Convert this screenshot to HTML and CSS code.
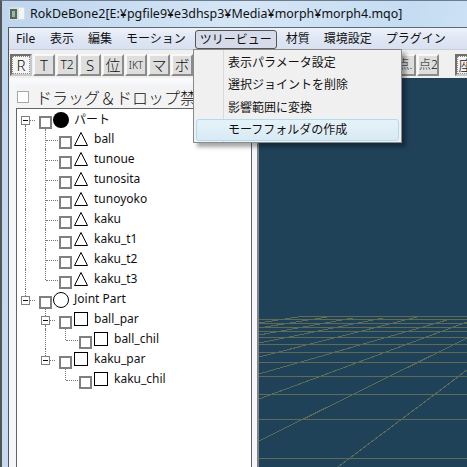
FILE: index.html
```html
<!DOCTYPE html>
<html lang="ja">
<head>
  <meta charset="UTF-8">
  <title>RokDeBone2</title>
  <link rel="stylesheet" href="styles.css">
</head>
<body>
  <div class="window">
    <div class="titlebar">
      <svg class="app-icon" width="16" height="13" viewBox="0 0 16 13">
        <rect x="0" y="0" width="16" height="13" fill="#d8dee2"/>
        <rect x="1" y="2" width="7" height="10" fill="#4f6a5c"/>
        <rect x="3" y="4" width="3" height="6" fill="#9db8a4"/>
        <rect x="10" y="1" width="5" height="11" fill="#f2f5f6"/>
      </svg>
      <span>RokDeBone2[E:¥pgfile9¥e3dhsp3¥Media¥morph¥morph4.mqo]</span>
    </div>

    <div class="client">
      <div class="menubar">
        <span class="menu-item file">File</span>
        <span class="menu-item">表示</span>
        <span class="menu-item">編集</span>
        <span class="menu-item">モーション</span>
        <span class="menu-item open">ツリービュー</span>
        <span class="menu-item">材質</span>
        <span class="menu-item">環境設定</span>
        <span class="menu-item">プラグイン</span>
      </div>

      <div class="popup">
        <div class="popup-item">表示パラメータ設定</div>
        <div class="popup-item">選択ジョイントを削除</div>
        <div class="popup-item">影響範囲に変換</div>
        <div class="popup-item active">モーフフォルダの作成</div>
      </div>

      <div class="toolbar">
        <button class="tool focus">R</button>
        <button class="tool">T</button>
        <button class="tool small">T2</button>
        <button class="tool">S</button>
        <button class="tool">位</button>
        <button class="tool tiny">IKT</button>
        <button class="tool">マ</button>
        <button class="tool">ボ</button>
        <div class="spacer"></div>
        <button class="tool small">点.</button>
        <button class="tool small">点2</button>
        <button class="tool focus last">座</button>
      </div>

      <div class="main">
        <div class="side">
          <label class="drag-check"><span class="checkbox"></span>ドラッグ＆ドロップ禁止</label>
          <div class="tree">
            <div class="row"><i class="cell exp down"></i><b class="box"></b><b class="disc"></b><span class="name">パート</span></div>

            <div class="row"><i class="cell guide"></i><i class="cell tee"></i><b class="box"></b><svg class="tri" width="14" height="14" viewBox="0 0 14 14"><path d="M7 0.5 L13.5 13.5 H0.5 Z" fill="#fff" stroke="#000"/></svg><span class="name">ball</span></div>
            <div class="row"><i class="cell guide"></i><i class="cell tee"></i><b class="box"></b><svg class="tri" width="14" height="14" viewBox="0 0 14 14"><path d="M7 0.5 L13.5 13.5 H0.5 Z" fill="#fff" stroke="#000"/></svg><span class="name">tunoue</span></div>
            <div class="row"><i class="cell guide"></i><i class="cell tee"></i><b class="box"></b><svg class="tri" width="14" height="14" viewBox="0 0 14 14"><path d="M7 0.5 L13.5 13.5 H0.5 Z" fill="#fff" stroke="#000"/></svg><span class="name">tunosita</span></div>
            <div class="row"><i class="cell guide"></i><i class="cell tee"></i><b class="box"></b><svg class="tri" width="14" height="14" viewBox="0 0 14 14"><path d="M7 0.5 L13.5 13.5 H0.5 Z" fill="#fff" stroke="#000"/></svg><span class="name">tunoyoko</span></div>
            <div class="row"><i class="cell guide"></i><i class="cell tee"></i><b class="box"></b><svg class="tri" width="14" height="14" viewBox="0 0 14 14"><path d="M7 0.5 L13.5 13.5 H0.5 Z" fill="#fff" stroke="#000"/></svg><span class="name">kaku</span></div>
            <div class="row"><i class="cell guide"></i><i class="cell tee"></i><b class="box"></b><svg class="tri" width="14" height="14" viewBox="0 0 14 14"><path d="M7 0.5 L13.5 13.5 H0.5 Z" fill="#fff" stroke="#000"/></svg><span class="name">kaku_t1</span></div>
            <div class="row"><i class="cell guide"></i><i class="cell tee"></i><b class="box"></b><svg class="tri" width="14" height="14" viewBox="0 0 14 14"><path d="M7 0.5 L13.5 13.5 H0.5 Z" fill="#fff" stroke="#000"/></svg><span class="name">kaku_t2</span></div>
            <div class="row"><i class="cell guide"></i><i class="cell ell"></i><b class="box"></b><svg class="tri" width="14" height="14" viewBox="0 0 14 14"><path d="M7 0.5 L13.5 13.5 H0.5 Z" fill="#fff" stroke="#000"/></svg><span class="name">kaku_t3</span></div>

            <div class="row"><i class="cell exp up"></i><b class="box"></b><b class="ring"></b><span class="name">Joint Part</span></div>
            <div class="row"><i class="cell"></i><i class="cell exp down up"></i><b class="box"></b><b class="square"></b><span class="name">ball_par</span></div>
            <div class="row"><i class="cell"></i><i class="cell guide"></i><i class="cell ell"></i><b class="box"></b><b class="square"></b><span class="name">ball_chil</span></div>
            <div class="row"><i class="cell"></i><i class="cell exp up"></i><b class="box"></b><b class="square"></b><span class="name">kaku_par</span></div>
            <div class="row"><i class="cell"></i><i class="cell"></i><i class="cell ell"></i><b class="box"></b><b class="square"></b><span class="name">kaku_chil</span></div>
          </div>
        </div>

        <svg class="view" viewBox="259 78 208 389" shape-rendering="crispEdges">
          <g stroke="#5f6b59" stroke-width="1">
            <path d="M298 316.5H467M259 319.5H467M259 323.5H467M259 327.5H467M259 331.5H467M259 337.5H467M259 344.5H467M259 352.5H467M259 362.5H467M259 376.5H467M259 394.5H467M259 419.5H467M259 458.5H467"/>
            <path d="M338 467L467 370M259 441L467 338M259 399L467 322M259 374L447 320M259 357L417 317M259 343L383 318M259 335L353 318M259 328L327 317M259 323L298 317"/>
          </g>
        </svg>
      </div>
    </div>
  </div>
</body>
</html>
```

FILE: styles.css
```css
* {
  box-sizing: border-box;
}

html, body {
  margin: 0;
  height: 100%;
  overflow: hidden;
}

body {
  font-family: "Noto Sans", "Noto Sans CJK JP", sans-serif;
  font-size: 12px;
  color: #111;
}

.window {
  height: 467px;
  display: flex;
  flex-direction: column;
  padding-left: 2px;
  background: linear-gradient(100deg, #bdd5ee 0%, #d5e6f6 45%, #c4dcf2 75%, #d6e7f7 100%);
  border-top: 1px solid #6d7c8a;
  border-left: 2px solid #555;
}

.titlebar {
  height: 26px;
  display: flex;
  align-items: center;
  gap: 5px;
  padding: 0 0 1px 5px;
  font-size: 12.45px;
  white-space: nowrap;
}

.app-icon {
  flex: none;
}

.client {
  position: relative;
  flex: 1;
  display: flex;
  flex-direction: column;
  margin-left: 4px;
  border-left: 1px solid #555;
  border-top: 1px solid #5d6873;
  background: #f0f0f0;
  min-height: 0;
}

.menubar {
  flex: none;
  height: 22px;
  display: flex;
  align-items: center;
  background: linear-gradient(#eef2fa, #dfe6f4 50%, #d9e1f1);
  border-bottom: 1px solid #c7cedb;
}

.menu-item {
  flex: none;
  height: 20px;
  line-height: 20px;
  padding: 0 7px;
  white-space: nowrap;
}

.menu-item.file {
  width: 34px;
}

.menu-item.open {
  line-height: 18px;
  padding: 0 4px;
  margin: 1px 2px 0;
  height: 19px;
  border: 1px solid #555;
  border-radius: 3px;
  background: #d5dbe8;
}

.popup {
  position: absolute;
  left: 184px;
  top: 21px;
  width: 209px;
  height: 94px;
  padding: 2px 2px 1px;
  background: linear-gradient(90deg, #f0f0f0 29px, #d9d9d9 29px, #d9d9d9 30px, #f0f0f0 30px);
  border: 1px solid #8a8a8a;
  box-shadow: 4px 4px 4px rgba(0, 0, 0, 0.35);
  z-index: 2;
}

.popup-item {
  height: 22px;
  line-height: 20px;
  padding-left: 31px;
  border: 1px solid transparent;
  margin-bottom: 0.4px;
}

.popup-item.active {
  border: 1px solid #aedcf0;
  border-radius: 3px;
  background: linear-gradient(#e6f2f9, #d8eaf4);
}

.toolbar {
  flex: none;
  height: 28px;
  display: flex;
  align-items: flex-start;
  gap: 1px;
  padding: 4px 0 0 1px;
  background: #f0f0f0;
}

.spacer {
  flex: 1;
}

.tool {
  flex: none;
  width: 22px;
  height: 22px;
  padding: 0;
  font: inherit;
  font-size: 15px;
  font-weight: 300;
  line-height: 16px;
  color: #111;
  background: #dedede;
  border: 2px solid;
  border-color: #f8f8f8 #8c8c8c #8c8c8c #f8f8f8;
  white-space: nowrap;
  overflow: hidden;
}

.tool.small {
  font-size: 12px;
}

.tool.tiny {
  font-size: 10px;
}

.tool.focus {
  outline: 1px dotted #888;
  outline-offset: -3px;
  background: #f4f4f4;
  border-color: #6e6e6e #c8c8c8 #c8c8c8 #6e6e6e;
}

.tool.last {
  margin-left: 15px;
  margin-right: -10px;
}

.main {
  flex: 1;
  display: flex;
  min-height: 0;
  background: #eef2fa;
}

.side {
  flex: none;
  width: 248px;
  padding-left: 7px;
  padding-top: 7px;
  overflow: hidden;
  background: linear-gradient(#fbfbfb 0, #f4f6fa 7px);
}

.drag-check {
  height: 23px;
  display: flex;
  align-items: center;
  gap: 7px;
  font-size: 16px;
  font-weight: 300;
  white-space: nowrap;
  overflow: hidden;
  background: #f3f3f3;
}

.checkbox {
  width: 12px;
  height: 12px;
  margin-left: 1px;
  flex: none;
  background: #fff;
  border: 1px solid #a8a8a8;
}

.tree {
  width: 236px;
  height: 360px;
  background: #fff;
  border: 1px solid #646464;
  border-bottom: 0;
}

.row {
  height: 20px;
  display: flex;
  align-items: flex-end;
}

.cell {
  position: relative;
  flex: none;
  align-self: stretch;
  width: 20px;
}

.guide::before,
.tee::before,
.ell::before,
.exp.up::before,
.exp.down::after {
  content: "";
  position: absolute;
  left: 8px;
  border-left: 1px dotted #777;
}

.guide::before,
.tee::before {
  top: 0;
  bottom: 0;
}

.ell::before {
  top: 0;
  height: 11px;
}

.tee::after,
.ell::after {
  content: "";
  position: absolute;
  left: 9px;
  right: -1px;
  top: 11px;
  border-top: 1px dotted #777;
}

/* the +/- box is painted with background layers, ::before/::after carry the lines */
.exp {
  background:
    linear-gradient(#111, #111) no-repeat 6px 11px / 5px 1px,
    linear-gradient(#fff, #fff) no-repeat 5px 8px / 7px 7px,
    linear-gradient(#808080, #808080) no-repeat 4px 7px / 9px 9px,
    repeating-linear-gradient(90deg, #777 0 1px, transparent 1px 2px) no-repeat 13px 11px / 6px 1px;
}

.exp.up::before {
  top: 0;
  height: 7px;
}

.exp.down::after {
  top: 16px;
  bottom: 0;
}

.box {
  flex: none;
  width: 13px;
  height: 13px;
  margin: 0 1px 0 2px;
  background: #fff;
  border: 2px solid #808080;
}

.disc,
.ring {
  flex: none;
  width: 16px;
  height: 16px;
  margin-bottom: 1px;
  border-radius: 50%;
}

.disc {
  background: #000;
}

.ring {
  background: #fff;
  border: 1px solid #000;
}

.square {
  flex: none;
  width: 14px;
  height: 14px;
  margin: 0 1px 3px 1px;
  background: #fff;
  border: 1px solid #000;
}

.tri {
  flex: none;
  margin: 0 1px 3px 1px;
}

.name {
  align-self: center;
  margin-left: 5px;
  padding-bottom: 1px;
  white-space: nowrap;
}

.view {
  flex: none;
  width: 210px;
  height: 389px;
  background: #1f4259;
  border-left: 2px solid #808080;
}
```
